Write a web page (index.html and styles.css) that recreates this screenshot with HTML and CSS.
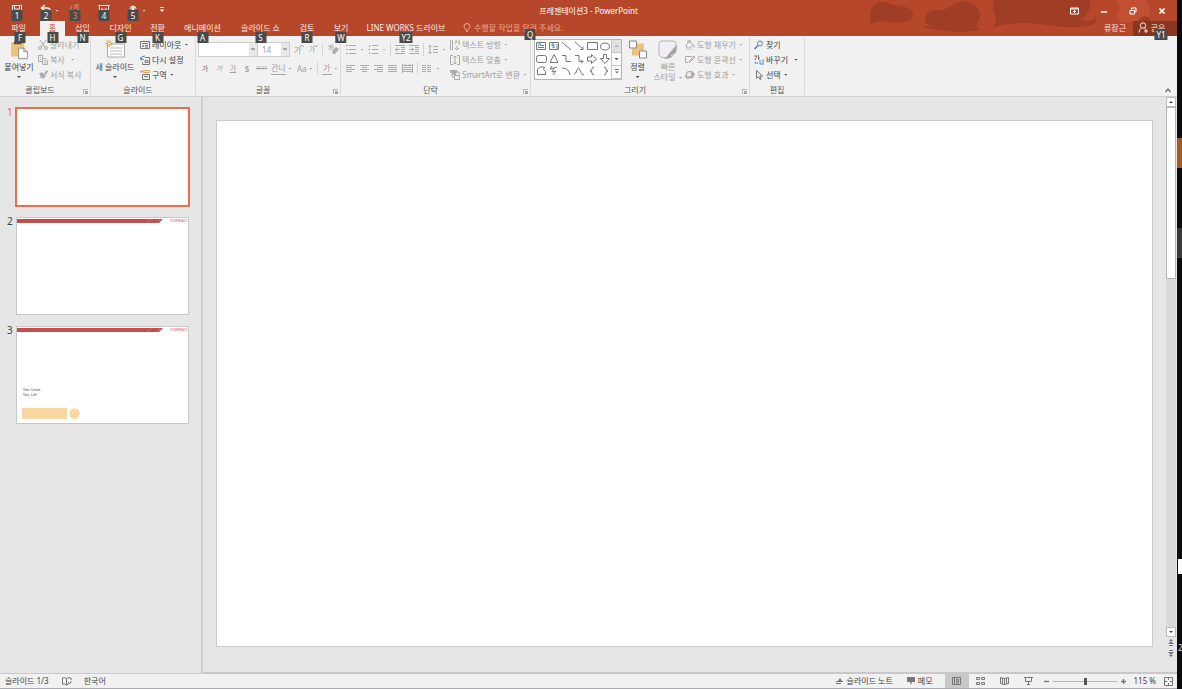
FILE: index.html
```html
<!DOCTYPE html>
<html lang="ko">
<head>
<meta charset="utf-8">
<title>프레젠테이션3 - PowerPoint</title>
<link rel="stylesheet" href="styles.css">
</head>
<body>
<div class="app">
  <header class="top">
    <svg class="clouds" viewBox="0 0 307 36" preserveAspectRatio="xMaxYMin slice" aria-hidden="true">
      <path d="M1 24 Q-2 10 5 4 Q13-1 22 5 Q32 5 40 9 Q46 14 40 20 Q32 24 20 22 Q8 20 1 24Z"/>
      <path d="M55 22 Q54 11 66 10 Q76 11 83 5 Q93-2 103 4 Q113 11 109 20 Q104 27 110 30 Q88 34 69 30 Q54 29 52 25 Q62 28 65 25 Q58 26 55 22Z"/>
      <path d="M123 0 H220 Q222 12 210 20 Q222 23 225 18 Q230 20 222 25 Q200 30 170 24 Q145 21 123 27 Q129 17 123 12Z"/>
      <path class="pale" d="M247 0 H276 Q284 10 276 22 H250 Q244 12 250 8Z"/>
      <path d="M267 22 Q273 13 279 18 Q281 20 280 24 H267Z"/>
    </svg>
    <div class="titlebar">
      <div class="quick">
        <button class="q" aria-label="저장"><svg width="12" height="12" viewBox="0 0 12 12"><path d="M1.500 1.500h9v9h-9zM4 8h5v3M3.500 2v3h5v-3"/></svg><kbd class="tip">1</kbd></button>
        <button class="q" aria-label="실행 취소"><svg width="12" height="12" viewBox="0 0 12 12"><path stroke-width="1.600" d="M5 1 1.500 4 5 7M2 4h5q3.500 0 3.500 4"/></svg><kbd class="tip">2</kbd></button>
        <i class="caret light"></i>
        <button class="q faded" aria-label="다시 실행"><svg width="12" height="12" viewBox="0 0 12 12"><path stroke-width="1.500" d="M3 2Q0 7 5 9q5 0 4-5L7 1M6 5V1h4"/></svg><kbd class="tip">3</kbd></button>
        <button class="q" aria-label="슬라이드 쇼 시작"><svg width="12" height="12" viewBox="0 0 12 12"><path d="M0 1.500h12M1.500 2v6h9v-6M4 4v2h4v-2M6 8v3"/></svg><kbd class="tip">4</kbd></button>
        <button class="q" aria-label="터치 모드"><svg width="12" height="12" viewBox="0 0 12 12"><path d="M3 5a3 3 0 1 1 6 0"/><path class="solid" d="M4.500 10V3q1.500-1.500 3 0v3l2.500 1v3z"/></svg><kbd class="tip">5</kbd></button>
        <i class="caret light"></i>
        <button class="q" aria-label="빠른 실행 도구 모음 사용자 지정"><svg width="6" height="6" viewBox="0 0 6 6"><path d="M1 .5h4"/><path class="solid" d="M.5 2.500h5L3 5z"/></svg></button>
      </div>
      <h1>프레젠테이션3 - PowerPoint</h1>
      <div class="window-buttons">
        <button aria-label="리본 메뉴 표시 옵션"><svg width="9" height="8" viewBox="0 0 9 8"><path d="M.5 1h8v6h-8zM.5 2h8M4.500 6V3.500M3 5l1.500-1.500L6 5"/></svg></button>
        <button aria-label="최소화"><svg width="8" height="8" viewBox="0 0 8 8"><path stroke-width="1.500" d="M1 5h6"/></svg></button>
        <button aria-label="이전 크기로 복원"><svg width="8" height="8" viewBox="0 0 8 8"><path d="M1 3.500h4.500v3.500H1zM2.500 3V1h4.500v4H6"/></svg></button>
        <button aria-label="닫기"><svg width="8" height="8" viewBox="0 0 8 8"><path stroke-width="1.700" d="m1.500 1.500 5 5m0-5-5 5"/></svg></button>
      </div>
    </div>
    <nav class="tabs">
      <button class="file">파일<kbd class="tip">F</kbd></button>
      <button class="active">홈<kbd class="tip">H</kbd></button>
      <button>삽입<kbd class="tip">N</kbd></button>
      <button>디자인<kbd class="tip">G</kbd></button>
      <button>전환<kbd class="tip">K</kbd></button>
      <button>애니메이션<kbd class="tip">A</kbd></button>
      <button>슬라이드 쇼<kbd class="tip">S</kbd></button>
      <button>검토<kbd class="tip">R</kbd></button>
      <button>보기<kbd class="tip">W</kbd></button>
      <button>LINE WORKS 드라이브<kbd class="tip">Y2</kbd></button>
      <button class="tell"><svg width="8" height="10" viewBox="0 0 8 10"><path d="M3 7Q1 5 1 3.500a3 3 0 0 1 6 0Q7 5 5 7zM3 8.500h2"/></svg>수행할 작업을 알려 주세요.<kbd class="tip">Q</kbd></button>
      <button class="user">류장근</button>
      <button class="share"><svg width="10" height="11" viewBox="0 0 10 11"><circle cx="5" cy="3.500" r="2.700"/><path d="M1 10.500Q1 7 3.500 6M6.500 6l1 1M8 7v4M6 9h4"/></svg>공유<kbd class="tip">Y1</kbd></button>
    </nav>
  </header>

  <section class="ribbon">
    <div class="group clip">
      <div class="tools">
        <button class="big"><svg width="20" height="24" viewBox="0 0 20 24"><path fill="#edc375" stroke="none" d="M1 4h15v16H1z"/><path fill="#555" stroke="none" d="M4 3h2q2-4 4 0h3v3H4z"/><path fill="#fff" stroke="#888" d="M9.500 10.500h6l4 4v8h-10zM15.500 10.500v4h4"/></svg><span>붙여넣기</span><i class="caret"></i></button>
        <div class="stack off">
          <button><svg width="10" height="10" viewBox="0 0 10 10"><path d="m2 0 5 7M8 0 3 7"/><circle cx="2" cy="8" r="1.500"/><circle cx="8" cy="8" r="1.500"/></svg>잘라내기</button>
          <button><svg width="10" height="10" viewBox="0 0 10 10"><path d="M.5.5h4v6h-4zM4.500 3.500h3l2 2v4h-5zM6 6h2M6 8h2M2 2.500h1M2 4.500h1"/></svg>복사<i class="caret far"></i></button>
          <button><svg width="10" height="10" viewBox="0 0 10 10"><path class="fill" d="m1 4 3-2 4 4-3 3zM6 3l3-3 1 1-2 4z"/><path d="m2 8 2-3"/></svg>서식 복사</button>
        </div>
      </div>
      <footer>클립보드<button class="launch" aria-label="클립보드 옵션"></button></footer>
    </div>

    <div class="group slides">
      <div class="tools">
        <button class="big"><svg width="20" height="20" viewBox="0 0 20 20"><path fill="#fff" stroke="#aaa" d="M2.500 4.500h17v13h-17z"/><path stroke="#bbb" d="M5 8.500h12M5 11.500h12M5 14.500h12"/><path stroke="#e9aa45" d="M4 0v8M0 4h8M1 1l6 6M7 1 1 7"/><circle cx="4" cy="4" r="1.500" fill="#fff" stroke="#e9aa45"/></svg><span>새 슬라이드</span><i class="caret"></i></button>
        <div class="stack">
          <button><svg width="10" height="10" viewBox="0 0 10 10"><path d="M.5 1.500h9v7h-9zM2 3.500h6M2.500 5.500h1v1h-1zM5 5.500h3M5 7h3"/></svg>레이아웃<i class="caret"></i></button>
          <button><svg width="10" height="10" viewBox="0 0 10 10"><path d="M5 2.500h4.500v7h-7v-2M5 5.500h3v2H5z"/><path class="blue" d="M1 4q0-3 4-3M0 2l1 3 3-1"/></svg>다시 설정</button>
          <button><svg width="10" height="10" viewBox="0 0 10 10"><path stroke="#e9a45c" d="M0 1.500h3M3.500.5h6v2h-6zM1 0v3"/><path d="M2.500 4.500h7v5h-7zM4 6.500h4"/></svg>구역<i class="caret"></i></button>
        </div>
      </div>
      <footer>슬라이드</footer>
    </div>

    <div class="group font off">
      <div class="tools rows">
        <div class="row">
          <span class="combo name"><select aria-label="글꼴"><option></option></select><i class="caret"></i></span><span class="combo size"><select aria-label="글꼴 크기"><option>14</option></select><i class="caret"></i></span>
          <button class="ic grow" aria-label="글꼴 크기 크게">가<svg width="4" height="4" viewBox="0 0 4 4"><path d="M0 3l2-2 2 2"/></svg></button><button class="ic grow small" aria-label="글꼴 크기 작게">가<svg width="4" height="4" viewBox="0 0 4 4"><path d="M0 1l2 2 2-2"/></svg></button><i class="sep"></i>
          <button class="ic" aria-label="서식 지우기"><svg width="12" height="11" viewBox="0 0 12 11"><path d="M1 2h3L2 6M5 0v6M5 3h2"/><path class="fill" d="m5 7 4-4 3 2-4 5H6z"/></svg></button>
        </div>
        <div class="row letters">
          <button class="ic small"><b>가</b></button><button class="ic small"><em>가</em></button><button class="ic small"><u>가</u></button><button class="ic"><b>S</b></button><button class="ic tiny"><s>가나다</s></button><button class="ic spacing">간나</button><i class="caret"></i><button class="ic case">Aa</button><i class="caret"></i><i class="sep"></i><button class="ic color">가</button><i class="caret"></i>
        </div>
      </div>
      <footer>글꼴<button class="launch" aria-label="글꼴 옵션"></button></footer>
    </div>

    <div class="group para off">
      <div class="tools">
        <div class="rows">
          <div class="row">
            <button class="ic" aria-label="글머리 기호"><svg width="10" height="9" viewBox="0 0 10 9"><path d="M0 .5h2M0 4.500h2M0 8.500h2M3 .5h7M3 4.500h7M3 8.500h7"/></svg></button><i class="caret"></i>
            <button class="ic" aria-label="번호 매기기"><svg width="10" height="9" viewBox="0 0 10 9"><path d="M1.500 0v2M0 4.500h2M1.500 7v2M4 .5h6M4 4.500h6M4 8.500h6"/></svg></button><i class="caret"></i><i class="sep"></i>
            <button class="ic" aria-label="내어쓰기"><svg width="10" height="9" viewBox="0 0 10 9"><path d="M0 .5h10M6 2.500h4M6 4.500h4M6 6.500h4M0 8.500h10M0 4.500h5M2.500 2.500l-2 2 2 2"/></svg></button>
            <button class="ic" aria-label="들여쓰기"><svg width="10" height="9" viewBox="0 0 10 9"><path d="M0 .5h10M6 2.500h4M6 4.500h4M6 6.500h4M0 8.500h10M0 4.500h5M2.500 2.500l2 2-2 2"/></svg></button><i class="sep"></i>
            <button class="ic" aria-label="줄 간격"><svg width="10" height="9" viewBox="0 0 10 9"><path d="M2 0v9M.5 2 2 .5 3.500 2M.5 7 2 8.500 3.500 7M5 1.500h5M5 4.500h5M5 7.500h5"/></svg></button><i class="caret"></i>
          </div>
          <div class="row">
            <button class="ic" aria-label="왼쪽 맞춤"><svg width="10" height="7" viewBox="0 0 10 7"><path d="M0 .5h9M0 2.500h6M0 4.500h9M0 6.500h6"/></svg></button>
            <button class="ic" aria-label="가운데 맞춤"><svg width="10" height="7" viewBox="0 0 10 7"><path d="M0 .5h9M2 2.500h5M0 4.500h9M2 6.500h5"/></svg></button>
            <button class="ic" aria-label="오른쪽 맞춤"><svg width="10" height="7" viewBox="0 0 10 7"><path d="M0 .5h9M3 2.500h6M0 4.500h9M3 6.500h6"/></svg></button>
            <button class="ic" aria-label="양쪽 맞춤"><svg width="10" height="7" viewBox="0 0 10 7"><path d="M0 .5h9M0 2.500h9M0 4.500h9M0 6.500h9"/></svg></button>
            <button class="ic" aria-label="균등 분할"><svg width="11" height="9" viewBox="0 0 11 9"><path d="M.5 0v9M10.500 0v9M1 1.500h9M2 3.500h7M1 5.500h9M1 7.500h9M3.500 0v2M7.500 0v2"/></svg></button><i class="sep"></i>
            <button class="ic" aria-label="열"><svg width="10" height="7" viewBox="0 0 10 7"><path d="M0 .5h4M0 2.500h4M0 4.500h4M0 6.500h4M5 .5h4M5 2.500h4M5 4.500h4M5 6.500h4"/></svg></button><i class="caret"></i>
          </div>
        </div>
        <div class="stack">
          <button><svg width="10" height="10" viewBox="0 0 10 10"><path d="M.5 0v10M2.500 0v10M5 1h2L5 4M9 0v5M9 2h1M7 6v4M5 8l2 2 2-2"/></svg>텍스트 방향<i class="caret"></i></button>
          <button><svg width="10" height="10" viewBox="0 0 10 10"><path d="M3 .5H.5v9H3M7 .5h2.500v9H7M5 1v8M3.500 2.500 5 1l1.500 1.500M3.500 7.500 5 9l1.500-1.500"/></svg>텍스트 맞춤<i class="caret"></i></button>
          <button><svg width="10" height="10" viewBox="0 0 10 10"><path class="fill" d="M0 0h7v3H0zM2 3h4v2H2z"/><path d="M4.500 5.500h5v4h-5zM2 4v3h2M7 2h2v3"/></svg>SmartArt로 변환<i class="caret"></i></button>
        </div>
      </div>
      <footer>단락<button class="launch" aria-label="단락 옵션"></button></footer>
    </div>

    <div class="group draw">
      <div class="tools">
        <div class="gallery">
          <svg width="76" height="38" viewBox="0 0 76 38" role="img" aria-label="도형">
            <path d="M1.500 2.500h9v7h-9zM14.500 2.500h9v7h-9zM3 7.500h6M6 5.500h3M22 4v5M27 2l9 8M40 2l8 7m0-2.500V9.500h-3M52.500 2.500h10v7h-10z"/><ellipse cx="70" cy="6.500" rx="4.500" ry="3.500"/>
            <path class="blue" d="M3 6l1.500-3L6 6M16 5h4M18 3v5l2-1"/>
            <rect x="1.500" y="15.500" width="10" height="7" rx="2"/><path d="M19 14.500l4 8h-8zM27 15.500h4v6h5M40 15.500h4v6h4m-2-2 2 2-2 2M52.500 17h4v-2.500l5 4.500-5 4.500V21h-4zM68.500 14.500h3v4h3L70 23.500 65.500 18.500h3z"/>
            <path d="M2.500 34.500V29l3-2h4l-1 2.500 2 2v3zM17 26l-2 3 4-1-2 4 4-1-3 4m1-7 3-1M27 28q7 0 8 7M39 34q2 0 3-4t3 0q1 5 4 5M59 27q-2 0-2 2t-2 2q2 0 2 2t2 2M69 27q2 0 2 2t2 2q-2 0-2 2t-2 2"/>
          </svg>
          <div class="spin"><button aria-label="위로"><i class="caret up"></i></button><button aria-label="아래로"><i class="caret"></i></button><button aria-label="자세히"><svg width="6" height="6" viewBox="0 0 6 6"><path d="M1 .5h4"/><path class="fill" d="M1 2.500h4l-2 2z"/></svg></button></div>
        </div>
        <button class="big arrange"><svg width="20" height="20" viewBox="0 0 20 20"><path fill="#edc375" stroke="none" d="M9 4h7v7H9zM4 9h7v7H4z"/><path fill="#fff" stroke="#888" d="M1.500 1.500h7v7h-7zM11.500 11.500h7v7h-7z"/></svg><span>정렬</span><i class="caret"></i></button>
        <button class="big quickstyle off"><svg width="20" height="20" viewBox="0 0 20 20"><path fill="#f3eef4" stroke="#b5b5b5" d="M4 1.500h11q3 0 3 3v7L13 18H4q-3-1-3-4V4q0-2 3-2.500z"/><path fill="#a5a5a5" stroke="none" d="m19 5-1 8-5 3-2-2zM11 14q3 1 2 4-4 2-7 1 3-1 5-5z"/></svg><span>빠른<br>스타일<i class="caret"></i></span></button>
        <div class="stack off">
          <button><svg width="10" height="10" viewBox="0 0 10 10"><path d="m1 5 4-4 3 4-3 3H2zM3 3V0h2v3M9 5v3"/><path stroke="#e6d5dc" d="M0 9.500h9"/></svg>도형 채우기<i class="caret"></i></button>
          <button><svg width="10" height="10" viewBox="0 0 10 10"><path d="M7 1.500H.5v6h3M4 7 9 1l1 1-5 5z"/></svg>도형 윤곽선<i class="caret"></i></button>
          <button><svg width="10" height="10" viewBox="0 0 10 10"><path class="fill" d="m2 2 5-1 3 3-2 4-6 1-2-3z"/><path fill="#f0e8f0" d="m2 2 4-.5L7 5 5 7H1z"/></svg>도형 효과<i class="caret"></i></button>
        </div>
      </div>
      <footer>그리기<button class="launch" aria-label="그리기 옵션"></button></footer>
    </div>

    <div class="group edit">
      <div class="tools">
        <div class="stack">
          <button><svg width="10" height="10" viewBox="0 0 10 10"><g class="blue"><circle cx="6" cy="3.500" r="2.500"/><path stroke-width="1.600" d="M4 5.500.5 9"/></g></svg>찾기</button>
          <button><svg width="10" height="10" viewBox="0 0 10 10"><path d="M0 1h3L1 5M4.500 0v5M4.500 3H6"/><path class="blue" d="M6 5v4h2M9 4v6M1 7v1h3"/></svg>바꾸기<i class="caret far"></i></button>
          <button><svg width="10" height="10" viewBox="0 0 10 10"><path d="M2.500.5v8l2-2 1.500 3 1-.5-1-3h2.500z"/></svg>선택<i class="caret"></i></button>
        </div>
      </div>
      <footer>편집</footer>
    </div>
    <button class="collapse" aria-label="리본 메뉴 축소"><svg width="6" height="5" viewBox="0 0 6 5"><path stroke-width="1.400" d="m.5 4 2.500-3L5.500 4"/></svg></button>
  </section>

  <main class="work">
    <ol class="thumbs">
      <li class="current"><span>1</span><div class="thumb"></div></li>
      <li><span>2</span><div class="thumb"><svg viewBox="0 0 171 96"><path fill="#c54d4b" d="M0 1h146l-4 4H0z"/><path stroke="#d98683" stroke-width=".6" d="m130 5 4-4M139 5l4-4"/><text x="153" y="4" class="brand">STORMPACK</text></svg></div></li>
      <li><span>3</span><div class="thumb"><svg viewBox="0 0 171 96"><path fill="#c54d4b" d="M0 1h146l-4 4H0z"/><path stroke="#d98683" stroke-width=".6" d="m130 5 4-4M139 5l4-4"/><text x="153" y="4" class="brand">STORMPACK</text><text x="6" y="64" class="note">Text : Center</text><text x="6" y="69" class="note">Text : Left</text><path fill="#f9d7a2" d="M5 81h45v11H5z"/><circle cx="57.500" cy="86.500" r="5.300" fill="#f9d7a2"/></svg></div></li>
    </ol>
    <div class="editor"><div class="slide"></div></div>
    <div class="scroll">
      <button class="box" aria-label="위로"><i class="caret up"></i></button>
      <div class="track"><div class="handle"></div></div>
      <button class="box" aria-label="아래로"><i class="caret"></i></button>
      <button class="page" aria-label="이전 슬라이드"><svg width="6" height="7" viewBox="0 0 6 7"><path class="fill" d="m1 2 2-2 2 2zM0 5l3-3 3 3zM1 6h4v1H1z"/></svg></button>
      <button class="page" aria-label="다음 슬라이드"><svg width="6" height="7" viewBox="0 0 6 7"><path class="fill" d="m1 5 2 2 2-2zM0 2l3 3 3-3zM1 0h4v1H1z"/></svg></button>
    </div>
  </main>

  <footer class="status">
    <span>슬라이드 1/3</span>
    <button class="spell" aria-label="맞춤법 검사"><svg width="10" height="9" viewBox="0 0 10 9"><path d="M4.500 1.500Q2 0 .5 1v6q2-.5 4 1zM4.500 1.500Q7 0 9 1v2M4.500 8l2-1M6 5l1.500 2L9.500 4"/></svg></button>
    <button>한국어</button>
    <button class="push"><svg width="8" height="8" viewBox="0 0 8 8"><path class="fill" d="m2 4 2-3 2 3z"/><path d="M0 4.500h7M0 6.500h5"/></svg>슬라이드 노트</button>
    <button class="memo"><svg width="8" height="8" viewBox="0 0 8 8"><path class="fill" d="M0 0h8v5H5L4 8 3 5H0z"/></svg>메모</button>
    <div class="views">
      <button class="on" aria-label="기본"><svg width="9" height="8" viewBox="0 0 9 8"><path d="M.5.5h8v7h-8zM2.500.5v7M4.500 2.500h2v2h-2zM4 6h3"/></svg></button>
      <button aria-label="여러 슬라이드"><svg width="9" height="8" viewBox="0 0 9 8"><path d="M.5.5h3v2h-3zM5.500.5h3v2h-3zM.5 5.500h3v2h-3zM5.500 5.500h3v2h-3z"/></svg></button>
      <button aria-label="읽기용 보기"><svg width="9" height="8" viewBox="0 0 9 8"><path d="M4.500 1.500.5.5v6l4 1 4-1v-6zM4.500 1.500v6M2.500 1v6M6.500 1v6"/></svg></button>
      <button aria-label="슬라이드 쇼"><svg width="9" height="8" viewBox="0 0 9 8"><path d="M0 .5h9M1.500 1v3.500h6V1M4.500 5v2.500M3 7.500h3"/></svg></button>
    </div>
    <div class="zoom">
      <button aria-label="축소"><svg width="5" height="5" viewBox="0 0 5 5"><path stroke-width="1.400" d="M0 2.500h5"/></svg></button>
      <input type="range" min="0" max="100" value="52" aria-label="확대/축소">
      <button aria-label="확대"><svg width="5" height="5" viewBox="0 0 5 5"><path stroke-width="1.400" d="M0 2.500h5M2.500 0v5"/></svg></button>
      <button class="pct">115 %</button>
      <button aria-label="창에 맞춤"><svg width="9" height="9" viewBox="0 0 9 9"><path d="M.5.5h8v8h-8zM4.500 1v2M4.500 6v2M1 4.500h2M6 4.500h2"/></svg></button>
    </div>
  </footer>
</div>
<aside class="desk"><i class="orange"></i><i class="gray"></i><i class="white"></i><span>2</span></aside>
</body>
</html>
```
FILE: styles.css
```css
* { box-sizing: border-box; }
html, body { height: 100%; margin: 0; }
body {
  display: flex;
  overflow: hidden;
  background: #0b0c0f;
  color: #444;
  font: 8px/12px "Noto Sans", "Noto Sans CJK KR", sans-serif;
}
button {
  display: flex;
  align-items: center;
  justify-content: center;
  margin: 0;
  padding: 0;
  border: 0;
  background: none;
  color: inherit;
  font: inherit;
  white-space: nowrap;
}
svg { display: block; flex: none; fill: none; stroke: currentColor; stroke-width: 1; }
.fill, .solid { fill: currentColor; stroke: none; }
.blue { stroke: #4a88c8; }
.caret { flex: none; width: 4px; height: 2px; background: currentColor; clip-path: polygon(0 0, 100% 0, 50% 100%); }
.caret.up { clip-path: polygon(50% 0, 100% 100%, 0 100%); }

.app { flex: 1; min-width: 0; display: flex; flex-direction: column; background: #e6e6e6; }

.top { position: relative; background: #b7472a; color: #fbe9e4; }
.clouds { position: absolute; right: 0; top: 0; width: 307px; height: 100%; fill: #9f3d25; stroke: none; }
.clouds .pale { fill: #c14f33; }
.titlebar { position: relative; display: grid; grid-template-columns: 1fr auto 1fr; height: 21px; align-items: center; }
.titlebar h1 { margin: 0; font: inherit; color: #fff; }
.quick { display: flex; align-items: center; padding-left: 11px; }
.q { position: relative; width: 12px; height: 21px; margin-right: 17px; padding-bottom: 2px; }
.q:nth-of-type(2), .q:nth-of-type(5) { margin-right: 3px; }
.quick .caret { margin-right: 10px; }
.q.faded { color: #cf7a64; }
.q.faded .tip { color: #c98f80; }
.tip {
  position: absolute;
  top: 10px;
  left: 50%;
  z-index: 2;
  min-width: 11px;
  height: 11px;
  padding: 0 2px;
  transform: translateX(-50%);
  background: #4b4b4b;
  color: #fff;
  font: 8px/11px "Noto Sans", sans-serif;
  text-align: center;
}
.window-buttons { display: flex; justify-content: flex-end; padding-right: 1px; color: #fff; }
.window-buttons button { width: 29px; height: 19px; }

.tabs { position: relative; display: grid; grid-template-columns: 40px 25px 35px 41px 33px 57px 59px 34px 34px 96px auto 1fr 44px; height: 15px; }
.tabs button { position: relative; padding-bottom: 2px; }
.tabs .file { padding-right: 3px; }
.tabs .active { background: #f1f1f1; color: #d24726; }
.tabs .tell { padding-left: 9px; gap: 3px; color: #eba893; }
.tabs .tell .tip { left: 76px; top: 8px; }
.tabs .user { justify-content: flex-end; padding-right: 7px; }
.tabs .share { padding-right: 7px; gap: 3px; background: #8a3520; }
.tabs .share .tip { left: 28px; top: 8px; }
.tabs .tip { top: 11px; }

.ribbon { display: flex; height: 61px; padding: 1px 0; background: #f1f1f1; border-bottom: 1px solid #d2d2d2; }
.ribbon svg { color: #777; }
.ribbon .off svg { color: #ababab; }
.group { display: flex; flex-direction: column; border-right: 1px solid #dadada; }
.clip { width: 91px; }
.slides { width: 105px; }
.font { width: 145px; }
.para { width: 190px; }
.draw { width: 219px; }
.edit { width: 55px; }
.tools { flex: 1; min-height: 0; display: flex; align-items: flex-start; padding-left: 3px; }
.group footer { flex: none; position: relative; height: 12px; line-height: 13px; color: #555; text-align: center; padding-right: 10px; }
.edit footer { padding-right: 0; }
.launch { position: absolute; right: 2px; bottom: 1px; width: 5px; height: 5px; border: solid #b5b5b5; border-width: 1px 0 0 1px; background: linear-gradient(#a5a5a5, #a5a5a5) 100% 100% / 3px 3px no-repeat; }
.off, .off .caret { color: #a0a0a0; }
.big { flex-direction: column; justify-content: flex-start; height: 44px; padding-top: 2px; }
.big svg { height: 21px; }
.big span { line-height: 10px; margin-top: 2px; }
.big > .caret { margin-top: 4px; }
.clip .big { width: 32px; }
.clip .stack { padding-left: 3px; }
.slides .big { width: 42px; }
.slides .stack { padding-left: 4px; }
.stack { display: grid; grid-template-rows: repeat(3, 15px); }
.stack button { justify-content: flex-start; gap: 2px; }
.stack .caret { margin-left: 1px; }
.stack .caret.far { margin-left: 4px; }
.rows { display: flex; flex-direction: column; gap: 4px; padding-top: 5px; }
.tools.rows { padding-left: 2px; }
.row { display: flex; align-items: center; height: 15px; gap: 4px; }
.row .sep { width: 1px; height: 13px; background: #d5d5d5; }
.ic { min-width: 10px; height: 15px; }
.combo { display: flex; align-items: center; height: 15px; border: 1px solid #cdcdcd; background: #fff; }
.combo select { flex: 1; min-width: 0; height: 13px; padding: 0 4px; border: 0; appearance: none; background: #fff; color: #a0a0a0; font: inherit; }
.combo .caret { width: 8px; height: 13px; clip-path: none; border: 5px solid #e8e8e8; border-width: 5px 2px 6px; background: #a8a8a8; }
.combo.name { width: 60px; }
.combo.size { width: 33px; margin-left: -5px; }
.grow svg { align-self: flex-start; margin-top: 2px; margin-left: -1px; }
.small { font-size: 7px; }
.tiny { font-size: 4px; }
.letters { padding-left: 2px; }
.letters .caret { margin-left: -2px; }
.spacing, .color { border-bottom: 1px solid #a3a3a3; height: 12px; }
.case { margin-left: 1px; }
.para .tools { padding-left: 4px; }
.para .rows { width: 105px; padding-left: 1px; }
.para .caret { color: #b0b0b0; }
.draw .tools { padding-left: 3px; }
.gallery { display: flex; width: 88px; height: 41px; margin-top: 2px; border: 1px solid #b5b5b5; background: #fff; }
.gallery svg { color: #777; }
.spin { flex: 1; display: grid; grid-template-rows: repeat(3, 13px); }
.spin button { border-left: 1px solid #c6c6c6; border-bottom: 1px solid #c6c6c6; }
.spin button:first-child { background: #e1e1e1; color: #aaa; }
.arrange { width: 31px; }
.quickstyle { width: 30px; }
.quickstyle .caret { display: inline-block; margin-left: 3px; vertical-align: middle; }
.draw .stack { padding-left: 2px; }
.edit .tools { padding-left: 4px; }
.collapse { margin: auto 6px 2px auto; }

.work { flex: 1; min-height: 0; display: flex; }
.thumbs { width: 203px; margin: 0; padding: 10px 11px 0 7px; list-style: none; border-right: 2px solid #d0d0d0; display: flex; flex-direction: column; gap: 9px; }
.thumbs li { display: grid; grid-template-columns: 8px 1fr; align-items: start; font-size: 10px; line-height: 10px; }
.thumb { height: 100px; padding: 1px; }
.thumb svg { width: 100%; height: 98px; border: 1px solid #c8c8c8; background: #fff; stroke: none; }
.current { color: #ec6a46; }
.current .thumb { border: 2px solid #ee6c49; background: #fff; }
.brand { font: 3px "Noto Sans", sans-serif; fill: #d0526a; }
.note { font: 3px "Noto Sans", sans-serif; fill: #333; }
.editor { flex: 1; display: flex; padding: 23px 13px 25px; border-bottom: 1px solid #c8c8c8; }
.slide { flex: 1; background: #fff; border: 1px solid #cacaca; }
.scroll { width: 11px; display: flex; flex-direction: column; padding-right: 1px; padding-bottom: 13px; border-bottom: 1px solid #c8c8c8; }
.box { height: 10px; border: 1px solid #bcbcbc; background: #fff; }
.track { flex: 1; background: #dadada; }
.handle { height: 33%; border: 1px solid #b5b5b5; background: #fff; }
.page { height: 11px; color: #777; }

.status { display: flex; align-items: center; height: 16px; padding: 0 4px 0 5px; background: #f1f1f1; border-top: 1px solid #c8c8c8; border-bottom: 1px solid #a9a9b2; }
.status svg { color: #777; }
.status button { gap: 3px; }
.status > button { margin-left: 12px; }
.status .spell { margin-left: 13px; }
.status .push { margin-left: auto; }
.status .memo { margin-left: 14px; margin-right: 12px; }
.views { display: flex; height: 14px; }
.views button { width: 24px; }
.views .on { background: #c8c8c8; }
.zoom { display: flex; align-items: center; margin-left: 3px; gap: 4px; }
.zoom .pct { margin: 0 4px; }
.zoom input { width: 64px; height: 9px; margin: 0; appearance: none; background: linear-gradient(#b4b4b4, #b4b4b4) center / 100% 1px no-repeat; }
.zoom input::-webkit-slider-thumb { appearance: none; width: 3px; height: 7px; background: #555; }

.desk { flex: none; width: 5px; display: flex; flex-direction: column; color: #ddd; overflow: hidden; }
.orange { height: 30px; margin-top: 138px; background: #a4591f; }
.gray { height: 30px; margin-top: 60px; background: #3a3a3a; }
.white { height: 15px; margin: 301px 0 0 1px; background: #fff; }
.desk span { margin-top: 68px; padding-left: 1px; }
```
